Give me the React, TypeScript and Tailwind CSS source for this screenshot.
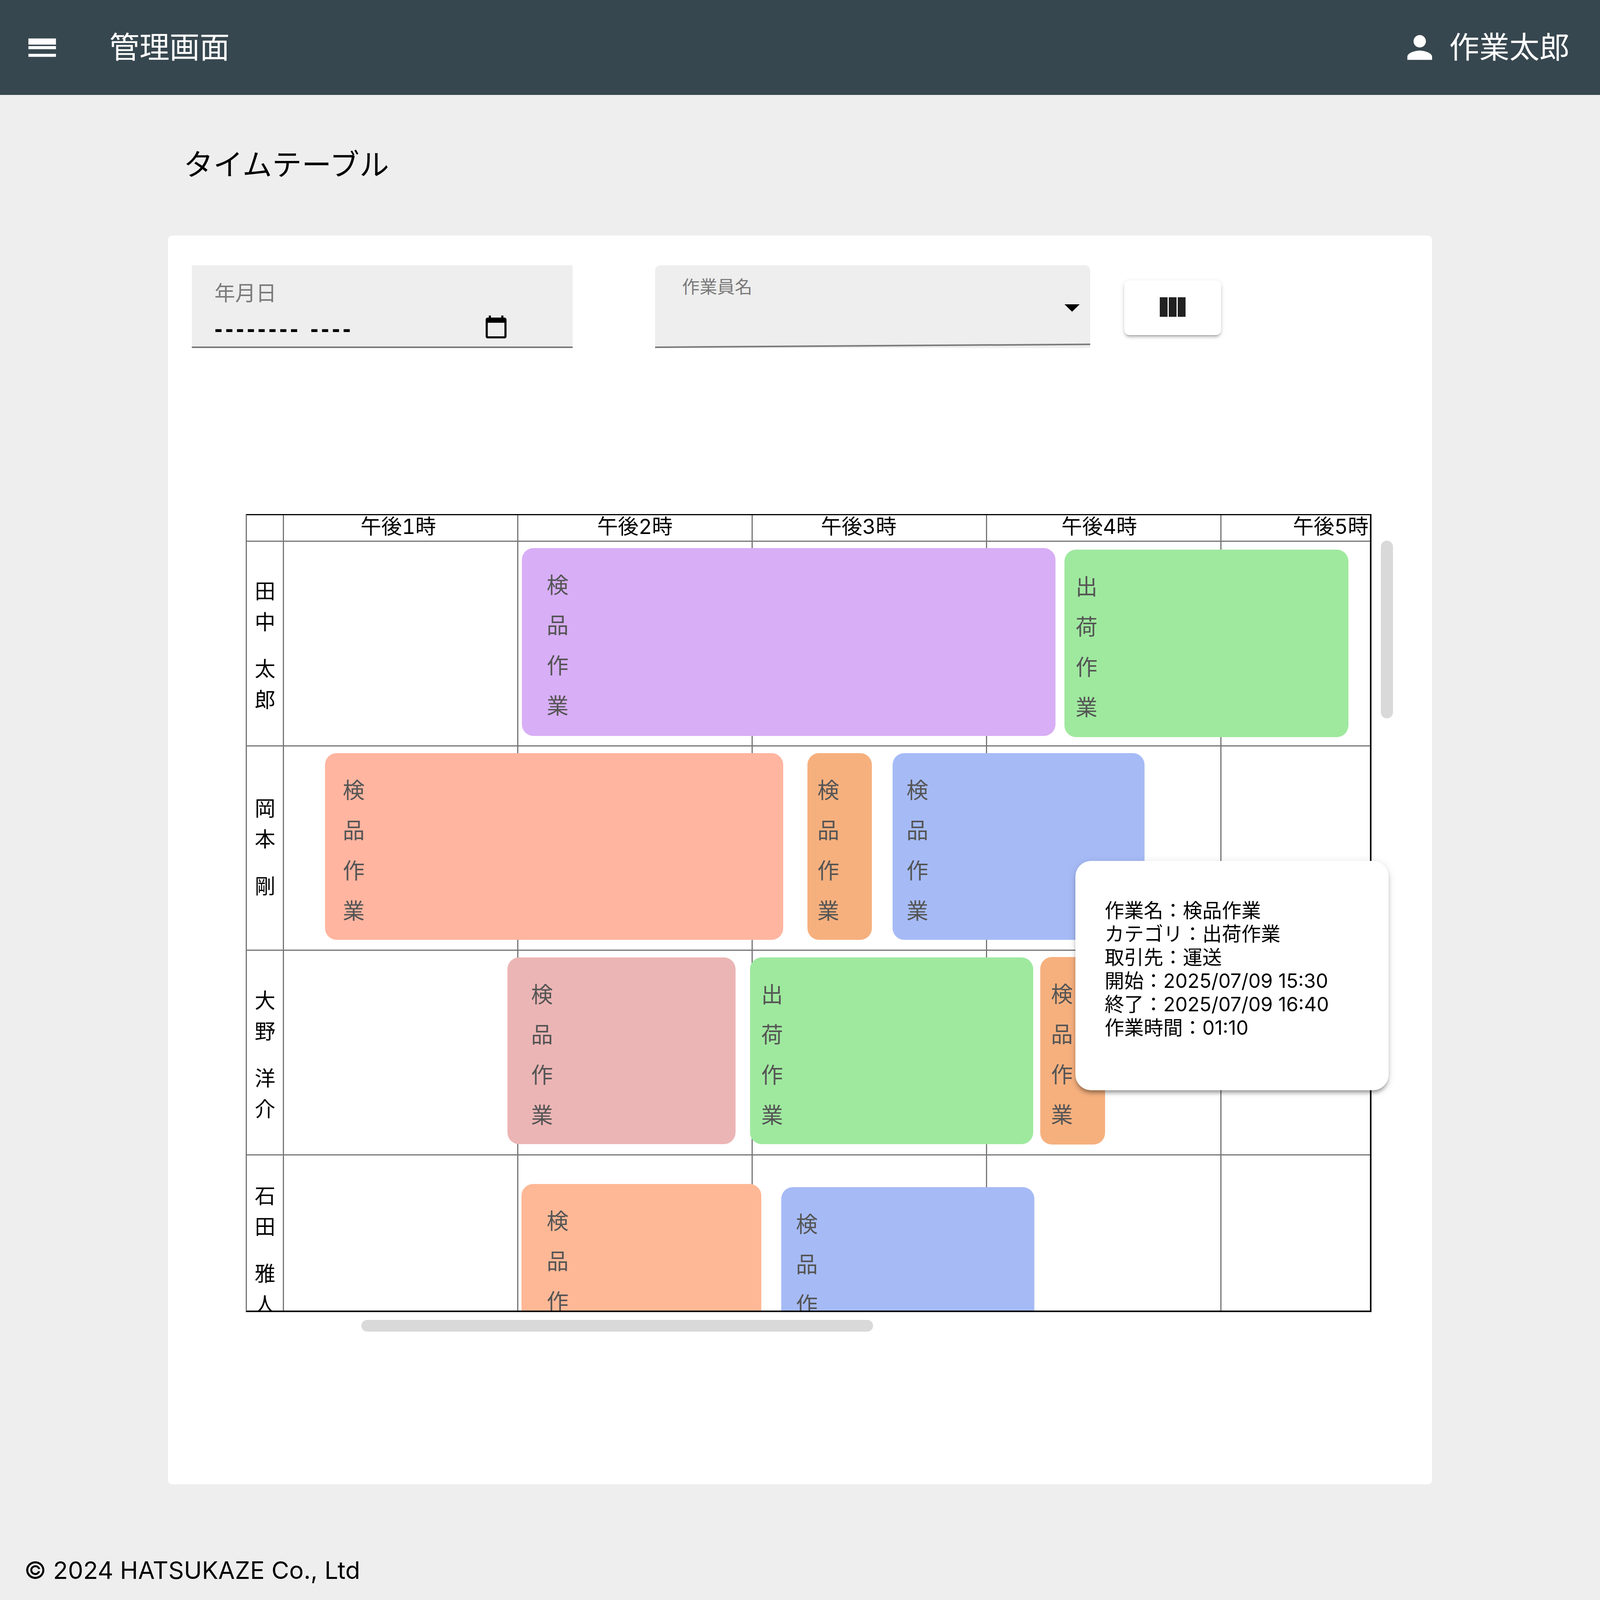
// The sandbox clamps the window to 4096x4096, so sizes are the reference's scaled to that frame.
const fontStack = {
  fontFamily: '"Inter", "Noto Sans CJK JP", sans-serif',
};

const hours = [
  { label: "午後1時", width: 600, pad: 196 },
  { label: "午後2時", width: 600, pad: 202 },
  { label: "午後3時", width: 601, pad: 175 },
  { label: "午後4時", width: 600, pad: 190 },
  { label: "午後5時", width: 380, pad: 183 },
];

const PURPLE = "#d8aef6";
const GREEN = "#9fe99f";
const SALMON = "#ffb5a0";
const ORANGE = "#f6b07e";
const BLUE = "#a6bbf6";
const PINK = "#ecb5b5";
const PEACH = "#ffb896";

const rows = [
  {
    name: "田中 太郎",
    height: 524,
    nameTop: 34,
    nameBottom: 0,
    blocks: [
      { left: 704, top: 16, width: 1366, height: 481, pad: 59, color: PURPLE, text: "検品作業" },
      { left: 2093, top: 20, width: 727, height: 480, pad: 24, color: GREEN, text: "出荷作業" },
    ],
  },
  {
    name: "岡本 剛",
    height: 523,
    nameTop: 20,
    nameBottom: 0,
    blocks: [
      { left: 200, top: 17, width: 1173, height: 478, pad: 41, color: SALMON, text: "検品作業" },
      { left: 1435, top: 17, width: 165, height: 478, pad: 21, color: ORANGE, text: "検品作業" },
      { left: 1653, top: 17, width: 645, height: 478, pad: 31, color: BLUE, text: "検品作業" },
    ],
  },
  {
    name: "大野 洋介",
    height: 524,
    nameTop: 36,
    nameBottom: 0,
    blocks: [
      { left: 667, top: 17, width: 584, height: 478, pad: 56, color: PINK, text: "検品作業" },
      { left: 1288, top: 17, width: 725, height: 478, pad: 24, color: GREEN, text: "出荷作業" },
      { left: 2031, top: 16, width: 166, height: 480, pad: 23, color: ORANGE, text: "検品作業" },
    ],
  },
  {
    name: "石田 雅人",
    height: 524,
    nameTop: 0,
    nameBottom: 13,
    blocks: [
      { left: 703, top: 73, width: 614, height: 478, pad: 60, color: PEACH, text: "検品作業" },
      { left: 1368, top: 81, width: 648, height: 478, pad: 33, color: BLUE, text: "検品作業" },
    ],
  },
];

const tooltipLines = [
  "作業名：検品作業",
  "カテゴリ：出荷作業",
  "取引先：運送",
  "開始：2025/07/09 15:30",
  "終了：2025/07/09 16:40",
  "作業時間：01:10",
];

function Header() {
  return (
    <header className="flex h-[243px] items-center justify-between bg-[#37474f] pl-[61px] pr-[78px] text-white">
      <div className="flex items-center">
        <svg viewBox="0 0 24 24" className="h-[94px] w-[94px] fill-white">
          <path d="M3 18h18v-2H3v2zm0-5h18v-2H3v2zm0-5v2h18V6H3z" />
        </svg>
        <span className="ml-[125px] text-[77px] leading-none">管理画面</span>
      </div>
      <div className="flex items-center">
        <svg viewBox="0 0 24 24" className="h-[95px] w-[95px] fill-white">
          <path d="M12 12c2.21 0 4-1.79 4-4s-1.79-4-4-4-4 1.79-4 4 1.79 4 4 4zm0 2c-2.67 0-8 1.34-8 4v2h16v-2c0-2.66-5.33-4-8-4z" />
        </svg>
        <span className="ml-[28px] text-[77px] leading-none">作業太郎</span>
      </div>
    </header>
  );
}

function SearchForm() {
  return (
    <div className="flex items-start pl-[61px] pt-[76px]">
      <div className="relative h-[212px] w-[975px] border-b-[4px] border-[#7a7a7a] bg-[#eeeeee] pl-[58px] pt-[46px]">
        <div className="text-[53px] leading-[53px] text-[#7a7a7a]">年月日</div>
        <div
          className="mt-[36px] text-[62px] font-bold leading-[53px] tracking-[7px] text-black"
          style={{ fontFamily: '"Liberation Sans", sans-serif' }}
        >
          -------- ----
        </div>
        <svg viewBox="0 0 24 24" className="absolute left-[747px] top-[126px] h-[64px] w-[64px] fill-black">
          <path d="M20 3h-1V1h-2v2H7V1H5v2H4c-1.1 0-2 .9-2 2v16c0 1.1.9 2 2 2h16c1.1 0 2-.9 2-2V5c0-1.1-.9-2-2-2zm0 18H4V8h16v13z" />
        </svg>
      </div>

      <div className="relative ml-[211px] h-[212px] w-[1114px] rounded-t-[14px] bg-[#eeeeee] pl-[69px] pt-[33px]">
        <div className="text-[45px] leading-[45px] text-[#7a7a7a]">作業員名</div>
        <svg viewBox="0 0 39 19" className="absolute left-[1048px] top-[100px] h-[19px] w-[39px] fill-black">
          <path d="M0 0h39L19.500 19z" />
        </svg>
        <div className="absolute bottom-0 left-0 h-[4px] w-full origin-bottom-left -rotate-[0.39deg] bg-[#7a7a7a]" />
      </div>

      <button className="ml-[87px] mt-[39px] flex h-[140px] w-[248px] items-center justify-center gap-[3px] rounded-[14px] bg-white pb-[4px] shadow-[0_8px_3px_-6px_rgba(0,0,0,0.2),0_6px_6px_0_rgba(0,0,0,0.14),0_3px_13px_0_rgba(0,0,0,0.12)]">
        <span className="h-[50px] w-[20px] bg-[#212121]" />
        <span className="h-[50px] w-[20px] bg-[#212121]" />
        <span className="h-[50px] w-[20px] bg-[#212121]" />
      </button>
    </div>
  );
}

function TimeTable() {
  return (
    <div className="relative ml-[199px] mt-[425px] w-[2882px]">
      <div className="h-[2043px] w-[2882px] overflow-hidden border-b-[4px] border-l-[3px] border-r-[4px] border-t-[3px] border-b-black border-l-[#757575] border-r-black border-t-black">
        <div className="flex h-[68px] border-b-[3px] border-[#757575]">
          <div className="w-[95px] border-r-[3px] border-[#757575]" />
          {hours.map((hour, i) => (
            <div
              key={hour.label}
              className={i < 4 ? "border-r-[3px] border-[#757575] text-[53px] leading-[58px] tabular-nums text-black" : "text-[53px] leading-[58px] tabular-nums text-black"}
              style={{ width: hour.width, paddingLeft: hour.pad }}
            >
              <span className="whitespace-nowrap">{hour.label}</span>
            </div>
          ))}
        </div>
        {rows.map((row) => (
          <div key={row.name} className="relative flex border-b-[3px] border-[#757575]" style={{ height: row.height }}>
            <div
              className="flex w-[95px] items-center justify-center border-r-[3px] border-[#757575] pr-[8px]"
              style={{ paddingTop: row.nameTop, paddingBottom: row.nameBottom }}
            >
              <span className="whitespace-pre text-[53px] leading-none tracking-[26px] text-black [writing-mode:vertical-rl]">
                {row.name}
              </span>
            </div>
            {hours.map((hour, i) => (
              <div
                key={hour.label}
                className={i < 4 ? "border-r-[3px] border-[#757575]" : ""}
                style={{ width: hour.width }}
              />
            ))}
            {row.blocks.map((block) => (
              <div
                key={block.left}
                className="absolute flex rounded-[30px] pt-[66px]"
                style={{
                  left: block.left,
                  top: block.top,
                  width: block.width,
                  height: block.height,
                  paddingLeft: block.pad,
                  backgroundColor: block.color,
                }}
              >
                <span className="h-fit text-[56px] leading-none tracking-[47px] text-[#555555] [writing-mode:vertical-rl]">
                  {block.text}
                </span>
              </div>
            ))}
          </div>
        ))}
      </div>

      {/* scroll bars */}
      <div className="absolute left-[2906px] top-[68px] h-[455px] w-[31px] rounded-full bg-[#d9d9d9]" />
      <div className="absolute left-[296px] top-[2063px] h-[30px] w-[1310px] rounded-full bg-[#d9d9d9]" />
    </div>
  );
}

function TaskTooltip() {
  return (
    <div className="absolute left-[2323px] top-[1601px] h-[587px] w-[802px] rounded-[40px] bg-white pl-[75px] pt-[97px] text-[50px] leading-[60px] text-black shadow-[0_10px_10px_-5px_rgba(0,0,0,0.24),0_8px_11px_0_rgba(0,0,0,0.14),0_3px_21px_0_rgba(0,0,0,0.12)]">
      {tooltipLines.map((line) => (
        <div key={line} className="whitespace-nowrap">
          {line}
        </div>
      ))}
    </div>
  );
}

export default function App() {
  return (
    <div className="h-[4096px] w-[4096px] overflow-hidden bg-[#eeeeee]" style={fontStack}>
      <Header />
      <main>
        <h1 className="ml-[470px] mt-[140px] text-[76px] font-normal leading-[76px] text-black">タイムテーブル</h1>
        <div className="relative ml-[430px] mt-[144px] h-[3197px] w-[3236px] rounded-[11px] bg-white">
          <SearchForm />
          <TimeTable />
          <TaskTooltip />
        </div>
      </main>
      <footer className="ml-[62px] mt-[190px] text-[62px] leading-[60px] text-black">© 2024 HATSUKAZE Co., Ltd</footer>
    </div>
  );
}
